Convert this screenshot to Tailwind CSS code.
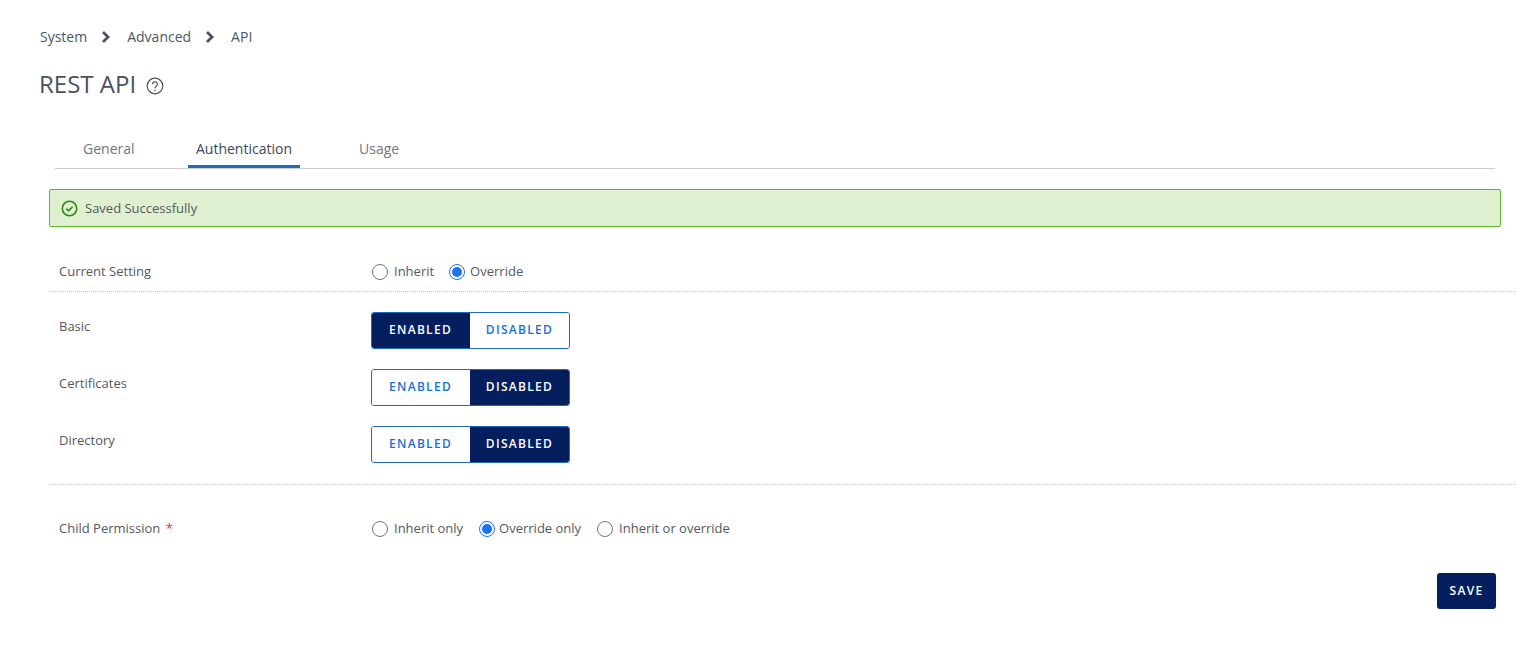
<!DOCTYPE html>
<html lang="en">
<head>
    <meta charset="UTF-8">
    <meta name="viewport" content="width=device-width, initial-scale=1.0">
    <title>REST API</title>
    <script src="https://cdn.jsdelivr.net/npm/@tailwindcss/browser@4"></script>
</head>
<body class="bg-white font-['Open_Sans',sans-serif] text-[13px] text-[#55595f] h-[650px] overflow-hidden">
    <!-- breadcrumb -->
    <nav class="h-[20px] mt-[26px] ml-[40px] flex items-center text-[14px] text-[#4a5763]">
        <span>System</span>
        <svg class="w-[10px] h-[12px] ml-[14px] mr-[16px] mt-[1px]" viewBox="0 0 10 12" fill="none" stroke="#47535f" stroke-width="2.8"><path d="M2 1l5 5-5 5"/></svg>
        <span>Advanced</span>
        <svg class="w-[10px] h-[12px] ml-[14px] mr-[16px] mt-[1px]" viewBox="0 0 10 12" fill="none" stroke="#47535f" stroke-width="2.8"><path d="M2 1l5 5-5 5"/></svg>
        <span>API</span>
    </nav>
    <!-- title -->
    <div class="h-[34px] mt-[21px] ml-[39px] flex items-center text-[#47535f]">
        <h1 class="text-[24px] leading-[34px] font-normal">REST API</h1>
        <svg class="w-[18px] h-[18px] ml-[10px] mt-[4px]" viewBox="0 0 18 18" fill="none" stroke="#47535f" stroke-width="1.2">
            <circle cx="9" cy="9" r="7.8"/>
            <path d="M6.6 7.2a2.4 2.4 0 1 1 3.7 2c-.9.6-1.3 1-1.3 2"/>
            <circle cx="9" cy="13.2" r=".8" fill="#47535f" stroke="none"/>
        </svg>
    </div>
    <!-- tabs -->
    <div class="h-[38px] mt-[30px] ml-[55px] mr-[21px] flex border-b border-[#cccccc] text-[14px] text-[#71777d]">
        <div class="w-[133px] pl-[28px] pt-[7px]">General</div>
        <div class="w-[112px] pt-[7px] text-center text-[#3c4854] font-medium border-b-[3px] border-[#1f69c0] h-[37px]">Authentication</div>
        <div class="ml-[59px] pt-[7px]">Usage</div>
    </div>
    <!-- alert -->
    <div class="h-[38px] mt-[20px] ml-[49px] mr-[15px] flex items-center bg-[#dff0d0] border border-[#62b52a] rounded-[2px] pl-[11px]">
        <svg class="w-[17px] h-[17px]" viewBox="0 0 17 17" fill="none" stroke="#2c8a12" stroke-width="1.6">
            <circle cx="8.5" cy="8.5" r="7.2"/>
            <path d="M5.3 8.7l2.3 2.2 4-4.2"/>
        </svg>
        <span class="ml-[7px] pt-[1px] text-[#55595f]">Saved Successfully</span>
    </div>
    <!-- current setting -->
    <div class="h-[65px] ml-[49px] flex items-center pt-[26px] pl-[10px] border-b border-dotted border-[#bdbdbd] pb-[1px]">
        <div class="w-[313px]">Current Setting</div>
        <label class="flex items-center">
            <span class="w-[16px] h-[16px] rounded-full border border-[#70757a]"></span>
            <span class="ml-[6px]">Inherit</span>
        </label>
        <label class="flex items-center ml-[15px]">
            <span class="w-[16px] h-[16px] rounded-full border border-[#1a73f0] flex items-center justify-center"><span class="w-[10px] h-[10px] rounded-full bg-[#1a73f0]"></span></span>
            <span class="ml-[5px]">Override</span>
        </label>
    </div>
    <!-- toggles -->
    <div class="ml-[49px] pl-[10px] pt-[20px] pb-[21px] border-b border-dotted border-[#bdbdbd] flex flex-col gap-[20px]">
        <div class="flex h-[37px]">
            <div class="w-[312px] pt-[5px]">Basic</div>
            <div class="flex w-[199px] h-[37px] rounded-[3px] border border-[#1f69c0] text-[12px] font-semibold tracking-[1.3px] overflow-hidden">
                <div class="w-[98px] pb-[1px] pr-[1px] flex items-center justify-center bg-[#041e5e] text-white">ENABLED</div>
                <div class="flex-1 pb-[1px] flex items-center justify-center bg-white text-[#1b6fd1]">DISABLED</div>
            </div>
        </div>
        <div class="flex h-[37px]">
            <div class="w-[312px] pt-[5px]">Certificates</div>
            <div class="flex w-[199px] h-[37px] rounded-[3px] border border-[#1f69c0] text-[12px] font-semibold tracking-[1.3px] overflow-hidden">
                <div class="w-[98px] pb-[1px] pr-[1px] flex items-center justify-center bg-white text-[#1b6fd1]">ENABLED</div>
                <div class="flex-1 pb-[1px] flex items-center justify-center bg-[#041e5e] text-white">DISABLED</div>
            </div>
        </div>
        <div class="flex h-[37px]">
            <div class="w-[312px] pt-[5px]">Directory</div>
            <div class="flex w-[199px] h-[37px] rounded-[3px] border border-[#1f69c0] text-[12px] font-semibold tracking-[1.3px] overflow-hidden">
                <div class="w-[98px] pb-[1px] pr-[1px] flex items-center justify-center bg-white text-[#1b6fd1]">ENABLED</div>
                <div class="flex-1 pb-[1px] flex items-center justify-center bg-[#041e5e] text-white">DISABLED</div>
            </div>
        </div>
    </div>
    <!-- child permission -->
    <div class="h-[20px] mt-[34px] ml-[59px] flex items-center">
        <div class="w-[313px]">Child Permission <span class="text-[#e8232d] ml-[2px]">*</span></div>
        <label class="flex items-center">
            <span class="w-[16px] h-[16px] rounded-full border border-[#70757a]"></span>
            <span class="ml-[6px]">Inherit only</span>
        </label>
        <label class="flex items-center ml-[16px]">
            <span class="w-[16px] h-[16px] rounded-full border border-[#1a73f0] flex items-center justify-center"><span class="w-[10px] h-[10px] rounded-full bg-[#1a73f0]"></span></span>
            <span class="ml-[4px]">Override only</span>
        </label>
        <label class="flex items-center ml-[16px]">
            <span class="w-[16px] h-[16px] rounded-full border border-[#70757a]"></span>
            <span class="ml-[6px]">Inherit or override</span>
        </label>
    </div>
    <!-- save -->
    <div class="mt-[34px] mr-[20px] flex justify-end">
        <button class="w-[59px] h-[36px] rounded-[3px] bg-[#041e5e] text-white text-[12px] font-semibold tracking-[1.3px]">SAVE</button>
    </div>
</body>
</html>
